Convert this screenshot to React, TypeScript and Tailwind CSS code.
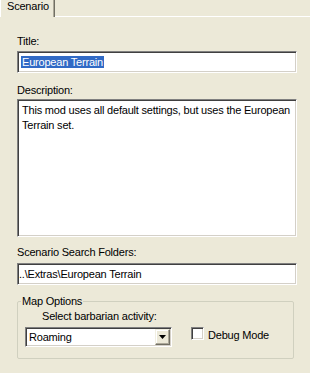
const sunken =
  'border border-t-[#808080] border-l-[#808080] border-b-white border-r-white shadow-[inset_1px_1px_0_#404040,inset_-1px_-1px_0_#d4d0c8]'

export default function App() {
  return (
    <div className="w-[310px] h-[373px] overflow-hidden bg-[#ece9d8] text-[11px] leading-[13px] tracking-[-0.2px] text-black font-['Liberation_Sans',Arial,sans-serif]">
      {/* Tab strip */}
      <div className="flex h-[17px]">
        <div className="w-[55px] h-[17px] border-l border-l-white border-r border-r-[#716f64] shadow-[inset_-1px_0_0_#aca899] pl-[6px]">
          Scenario
        </div>
        <div className="flex-1 border-b border-b-white h-[17px]" />
      </div>

      <div className="flex flex-col pl-[17px]">
        <div className="mt-[18px]">Title:</div>
        <div className={`mt-[3px] w-[280px] h-[22px] bg-white flex items-center pl-[3px] ${sunken}`}>
          <span className="bg-[#316ac5] text-white px-px leading-[12px]">European Terrain</span>
        </div>

        <div className="mt-[11px]">Description:</div>
        <div className={`mt-[2px] w-[280px] h-[138px] bg-white pl-[4px] pt-[3px] leading-[15px] whitespace-nowrap ${sunken}`}>
          <div>This mod uses all default settings, but uses the European</div>
          <div>Terrain set.</div>
        </div>

        <div className="mt-[9px]">Scenario Search Folders:</div>
        <div className={`mt-[4px] w-[280px] h-[22px] bg-white flex items-center pl-[1px] ${sunken}`}>
          ..\Extras\European Terrain
        </div>

        <fieldset className="mt-[10px] w-[277px] h-[64px] border border-[#d0d0bf] rounded-[2px]">
          <legend className="ml-[3px] px-[1px]">Map Options</legend>
          <div className="mt-[2px] pl-[24px]">Select barbarian activity:</div>
          <div className="mt-[4px] flex items-start">
            <div className={`ml-[7px] w-[147px] h-[20px] bg-white flex items-center justify-between ${sunken}`}>
              <span className="pl-[3px]">Roaming</span>
              <div className="w-[15px] h-[16px] mr-[1px] bg-[#ece9d8] border border-t-[#f1efe2] border-l-[#f1efe2] border-b-[#716f64] border-r-[#716f64] shadow-[inset_-1px_-1px_0_#aca899,inset_1px_1px_0_#ffffff] flex items-center justify-center">
                <svg width="7" height="4" viewBox="0 0 7 4">
                  <path d="M0 0h7L3.5 4z" fill="#000" />
                </svg>
              </div>
            </div>
            <div className={`ml-[19px] w-[13px] h-[13px] bg-white ${sunken}`} />
            <span className="ml-[4px] mt-[2px]">Debug Mode</span>
          </div>
        </fieldset>
      </div>
    </div>
  )
}
